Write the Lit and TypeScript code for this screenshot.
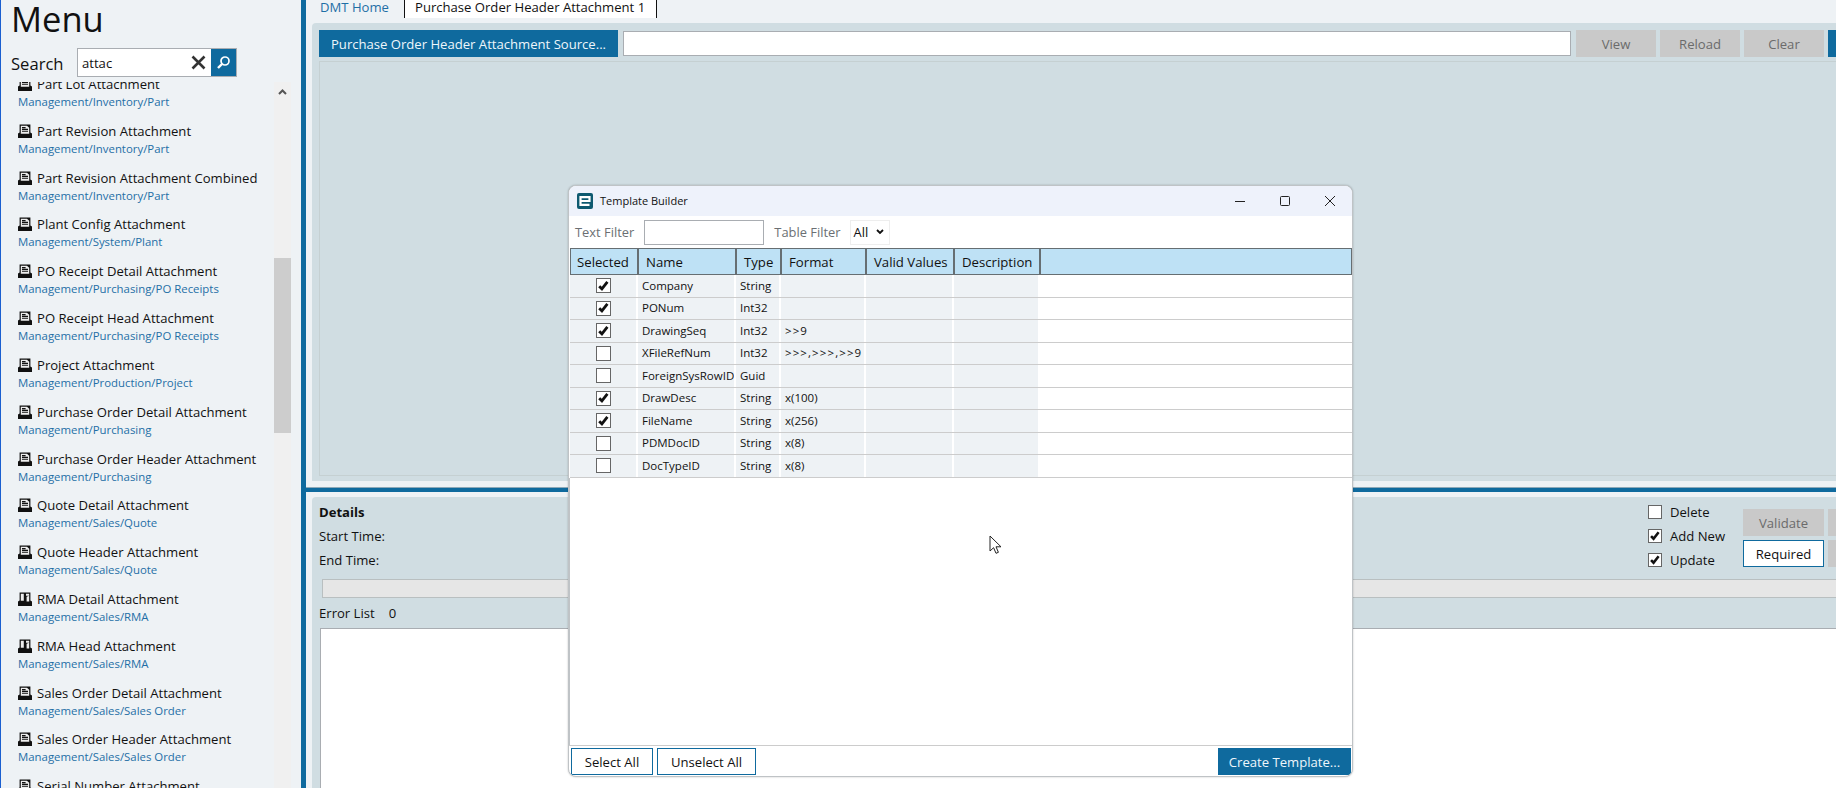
import { LitElement, html, css, svg } from 'lit';
import { customElement } from 'lit/decorators.js';

// sidebar entries, in the order they show up in the search result
const MENU = [
  ['Part Lot Attachment', 'Management/Inventory/Part'],
  ['Part Revision Attachment', 'Management/Inventory/Part'],
  ['Part Revision Attachment Combined', 'Management/Inventory/Part'],
  ['Plant Config Attachment', 'Management/System/Plant'],
  ['PO Receipt Detail Attachment', 'Management/Purchasing/PO Receipts'],
  ['PO Receipt Head Attachment', 'Management/Purchasing/PO Receipts'],
  ['Project Attachment', 'Management/Production/Project'],
  ['Purchase Order Detail Attachment', 'Management/Purchasing'],
  ['Purchase Order Header Attachment', 'Management/Purchasing'],
  ['Quote Detail Attachment', 'Management/Sales/Quote'],
  ['Quote Header Attachment', 'Management/Sales/Quote'],
  ['RMA Detail Attachment', 'Management/Sales/RMA'],
  ['RMA Head Attachment', 'Management/Sales/RMA'],
  ['Sales Order Detail Attachment', 'Management/Sales/Sales Order'],
  ['Sales Order Header Attachment', 'Management/Sales/Sales Order'],
  ['Serial Number Attachment', 'Management/Sales/Serial Number'],
];

// selected, name, type, format
const FIELDS: [boolean, string, string, string][] = [
  [true, 'Company', 'String', ''],
  [true, 'PONum', 'Int32', ''],
  [true, 'DrawingSeq', 'Int32', '>>9'],
  [false, 'XFileRefNum', 'Int32', '>>>,>>>,>>9'],
  [false, 'ForeignSysRowID', 'Guid', ''],
  [true, 'DrawDesc', 'String', 'x(100)'],
  [true, 'FileName', 'String', 'x(256)'],
  [false, 'PDMDocID', 'String', 'x(8)'],
  [false, 'DocTypeID', 'String', 'x(8)'],
];

const docIcon = svg`<svg class="doc" width="14" height="14" viewBox="0 0 14 14">
  <path fill="#111" d="M0 14V9.6l1.6-1.2V.6h10.8v7.8L14 9.6V14z"/>
  <path fill="#eee" d="M2.8 1.7h6.2l2.2 2v6H2.8z"/>
  <path stroke="#111" stroke-width="1.1" d="M4 3.6h3.6M4 5.4h6M4 7.2h6"/>
</svg>`;

// the RMA entries have a slightly different page on the tray
const docIconAlt = svg`<svg class="doc" width="14" height="14" viewBox="0 0 14 14">
  <path fill="#111" d="M0 14V9.6l1.6-1.2V.6h10.8v7.8L14 9.6V14z"/>
  <path fill="#eee" d="M2.8 1.7h3v7h-3zM8 1.7h3.2v2H8zM8.6 4.8l2.6-1v5.6H8.6z"/>
</svg>`;

const checkMark = svg`<svg width="14" height="14" viewBox="0 0 14 14">
  <path fill="none" stroke="#111" stroke-width="3" d="M2.4 7.2l2.9 3L11.2 2.6"/>
</svg>`;

@customElement('app-root')
export class AppRoot extends LitElement {
  static styles = css`
    :host {
      display: flex;
      position: relative;
      width: 1836px;
      height: 788px;
      overflow: hidden;
      background: #eef2f5;
      color: #111;
      font-family: 'Open Sans', 'Noto Sans', sans-serif;
      font-size: 13.1px;
    }

    /* left menu */
    .sidebar {
      flex: none;
      box-sizing: border-box;
      width: 301px;
      height: 788px;
      border-left: 1px solid #1a5fd0;
      display: flex;
      flex-direction: column;
    }
    .menu-title {
      height: 37px;
      margin: 0 0 1px 10px;
      font-size: 34.5px;
      font-weight: 400;
      line-height: 37px;
    }
    .search {
      height: 29px;
      margin-top: 10px;
      display: flex;
      align-items: center;
      padding-left: 10px;
      font-size: 16.6px;
    }
    .search-label {
      width: 66px;
      position: relative;
      top: 1px;
    }
    .search-box {
      box-sizing: border-box;
      width: 160px;
      height: 29px;
      border: 1px solid #a9adb2;
      background: #fff;
      display: flex;
      align-items: center;
      padding-left: 4px;
      font-size: 13.1px;
    }
    .search-box span {
      flex: 1;
    }
    .search-box .clear {
      margin-right: 5px;
      display: block;
    }
    .search-go {
      width: 25px;
      height: 27px;
      background: #0f6a9e;
      display: flex;
      align-items: center;
      justify-content: center;
    }
    .list-wrap {
      flex: 1;
      min-height: 0;
      margin-top: 5px;
      display: flex;
      overflow: hidden;
    }
    .list {
      width: 273px;
      flex: none;
      padding-left: 17px;
      box-sizing: border-box;
      margin-top: -8px;
    }
    .item {
      height: 46.82px;
    }
    .item-title {
      height: 20px;
      line-height: 20px;
      display: flex;
      align-items: center;
      gap: 5px;
      white-space: nowrap;
    }
    .doc {
      flex: none;
    }
    .item-path {
      height: 15px;
      line-height: 15px;
      font-size: 11.4px;
      color: #1f6fa6;
      white-space: nowrap;
    }
    .scroll {
      width: 17px;
      flex: none;
      background: #f0f0f0;
      display: flex;
      flex-direction: column;
      align-items: center;
    }
    .scroll svg {
      margin-top: 7px;
    }
    .thumb {
      width: 17px;
      height: 175px;
      margin-top: 163px;
      background: #cdcdcd;
    }
    .splitter-v {
      flex: none;
      width: 5px;
      background: #0f6a9e;
    }

    /* right side */
    .main {
      flex: 1;
      min-width: 0;
      padding-left: 6px;
      display: flex;
      flex-direction: column;
    }
    .tabs {
      flex: none;
      height: 18px;
      margin-bottom: 5px;
      display: flex;
      align-items: stretch;
      line-height: 14px;
    }
    .tab-home {
      width: 92px;
      padding-left: 8px;
      box-sizing: border-box;
      color: #1f6fa6;
    }
    .tab-active {
      box-sizing: border-box;
      width: 253px;
      background: #fff;
      border: solid #111;
      border-width: 0 1px;
      padding-left: 10px;
    }
    .top-panel {
      flex: none;
      box-sizing: border-box;
      height: 458px;
      background: #d0dde2;
      border-radius: 4px 0 0 0;
      padding: 7px 0 5px 7px;
      display: flex;
      flex-direction: column;
    }
    .toolbar {
      flex: none;
      height: 27px;
      display: flex;
      gap: 4px;
      margin-bottom: 4px;
      white-space: nowrap;
    }
    .btn {
      flex: none;
      box-sizing: border-box;
      height: 27px;
      width: 80px;
      display: flex;
      align-items: center;
      justify-content: center;
    }
    .btn.primary {
      background: #0f6a9e;
      color: #eef6fb;
    }
    .btn.off {
      background: #c9c9c9;
      color: #6b6b6b;
    }
    .btn.source {
      width: 299px;
    }
    .path-input {
      flex: none;
      box-sizing: border-box;
      width: 948px;
      height: 25px;
      margin: 1px 1px 1px 1px;
      background: #fff;
      border: 1px solid #a9adb2;
    }
    .canvas {
      flex: 1;
      border: 1px solid #c5d0d2;
      border-right: 0;
    }
    .splitter-h {
      flex: none;
      box-sizing: border-box;
      height: 5px;
      margin: 6px 0 5px -6px;
      background: #0f6a9e;
      border-top: 1px solid #8ea9b8;
    }
    .bottom-panel {
      flex: 1;
      min-height: 0;
      box-sizing: border-box;
      background: #d0dde2;
      border-radius: 4px 0 0 0;
      padding: 6px 0 0 7px;
      display: flex;
      flex-direction: column;
    }
    .details {
      flex: none;
      height: 76px;
      display: flex;
    }
    .details-left {
      flex: none;
      width: 1329px;
    }
    .details-left div,
    .check-row {
      height: 24px;
      line-height: 18px;
    }
    .details-head {
      font-weight: 700;
    }
    .checks {
      flex: none;
      width: 95px;
    }
    .check-row {
      display: flex;
      gap: 8px;
    }
    .box {
      flex: none;
      box-sizing: border-box;
      width: 14px;
      height: 14px;
      margin-top: 2px;
      background: #fff;
      border: 1px solid #666;
      display: flex;
      align-items: center;
      justify-content: center;
    }
    .details-btns {
      flex: none;
      margin-top: 6px;
      display: grid;
      grid-template-columns: 81px 80px;
      grid-auto-rows: 27px;
      gap: 4px;
    }
    .btn.outline {
      width: 81px;
      background: #fff;
      border: 1px solid #0f6a9e;
    }
    .btn.validate {
      width: 81px;
    }
    .progress {
      flex: none;
      height: 19px;
      margin-left: 3px;
      box-sizing: border-box;
      background: #e6e6e6;
      border: solid #b9bfc0;
      border-width: 1px 0 1px 1px;
    }
    .error-row {
      flex: none;
      height: 30px;
      display: flex;
      gap: 14px;
      align-items: center;
    }
    .error-box {
      flex: 1;
      margin-left: 1px;
      background: #fff;
      border: solid #a9adb2;
      border-width: 1px 0 0 1px;
    }

    /* the floating dialog */
    .dialog {
      position: absolute;
      left: 568px;
      top: 185px;
      box-sizing: border-box;
      width: 785px;
      height: 592px;
      background: #fff;
      border: 1px solid #bfc3c6;
      border-radius: 8px;
      box-shadow: 0 0 2px rgba(0, 0, 0, 0.25);
      display: flex;
      flex-direction: column;
      overflow: hidden;
    }
    .titlebar {
      flex: none;
      height: 30px;
      background: #eef2fb;
      display: flex;
      align-items: center;
      padding-left: 8px;
      font-size: 11px;
    }
    .titlebar .logo {
      margin-right: 7px;
    }
    .titlebar .name {
      flex: 1;
      position: relative;
      top: -1px;
    }
    .win {
      width: 45px;
      height: 30px;
      display: flex;
      align-items: center;
      justify-content: center;
    }
    .filters {
      flex: none;
      height: 32px;
      display: flex;
      align-items: center;
      padding-left: 6px;
      color: #6b6f73;
      font-size: 12.9px;
    }
    .text-filter {
      box-sizing: border-box;
      width: 120px;
      height: 25px;
      margin: 0 10px;
      border: 1px solid #a9adb2;
    }
    .table-filter {
      box-sizing: border-box;
      width: 40px;
      height: 25px;
      margin-left: 9px;
      border: 1px solid #eee;
      color: #111;
      display: flex;
      align-items: center;
      padding-left: 3px;
      gap: 8px;
    }
    .grid {
      flex: none;
      margin-left: 1px;
    }
    .grid-row {
      display: grid;
      grid-template-columns: 68px 98px 45px 85px 88px 86px 1fr;
    }
    .grid-head {
      box-sizing: border-box;
      height: 27px;
      background: #bee1f5;
      border: 1px solid #666e72;
      font-size: 13.2px;
    }
    .grid-head span {
      display: flex;
      align-items: center;
      padding-left: 7px;
      border-right: 2px solid #666e72;
    }
    .grid-head span:first-child {
      padding-left: 6px;
    }
    .grid-head span:last-child {
      border-right: 0;
    }
    .grid-body {
      box-sizing: border-box;
      height: 22.5px;
      border-bottom: 1px solid #ccc;
      font-size: 11.5px;
    }
    .grid-body > span {
      display: flex;
      align-items: center;
      padding: 0 0 1px 4px;
      background: #eef2f5;
      border-right: 2px solid #fff;
      white-space: nowrap;
      overflow: hidden;
    }
    .grid-body > span.mask {
      letter-spacing: 1.1px;
    }
    .grid-body > span.tick {
      justify-content: center;
      padding: 0;
    }
    .grid-body > span.tick .box {
      width: 15px;
      height: 15px;
      margin-top: 0;
    }
    .grid-body > span:last-child {
      background: #fff;
      border-right: 0;
    }
    .spacer {
      flex: 1;
      border-left: 1px solid #bfc3c6;
    }
    .dialog-actions {
      flex: none;
      height: 31px;
      box-sizing: border-box;
      border-top: 1px solid #ccc;
      padding: 2px 1px 0 2px;
      display: flex;
      gap: 4px;
    }
    .dialog-actions .btn.outline {
      width: 82px;
    }
    .dialog-actions .btn.outline.wide {
      width: 99px;
    }
    .dialog-actions .btn.create {
      width: 133px;
      margin-left: auto;
    }
    .cursor {
      position: absolute;
      left: 989px;
      top: 535px;
    }
  `;

  renderSidebar() {
    return html`
      <div class="sidebar">
        <h1 class="menu-title">Menu</h1>
        <div class="search">
          <span class="search-label">Search</span>
          <div class="search-box">
            <span>attac</span>
            <svg class="clear" width="15" height="15" viewBox="0 0 15 15">
              <path stroke="#333" stroke-width="2.6" d="M1.5 1.5l12 12M13.5 1.5l-12 12" />
            </svg>
            <div class="search-go">
              <svg width="15" height="15" viewBox="0 0 15 15" fill="none" stroke="#fff">
                <circle cx="9" cy="6" r="4" stroke-width="1.7" />
                <path stroke-width="2.4" d="M6 9l-4 4" />
              </svg>
            </div>
          </div>
        </div>
        <div class="list-wrap">
          <div class="list">
            ${MENU.map(
              ([title, path]) => html`
                <div class="item">
                  <div class="item-title">
                    ${title.startsWith('RMA') ? docIconAlt : docIcon}<span>${title}</span>
                  </div>
                  <div class="item-path">${path}</div>
                </div>
              `,
            )}
          </div>
          <div class="scroll">
            <svg width="9" height="6" viewBox="0 0 9 6" fill="none">
              <path stroke="#555" stroke-width="2" d="M1 5l3.5-3.5L8 5" />
            </svg>
            <div class="thumb"></div>
          </div>
        </div>
      </div>
    `;
  }

  renderDialog() {
    return html`
      <div class="dialog">
        <div class="titlebar">
          <svg class="logo" width="16" height="16" viewBox="0 0 16 16">
            <rect width="16" height="16" rx="2" fill="#0e5a70" />
            <path fill="none" stroke="#fff" stroke-width="2.2" d="M3.5 8h9V4.2h-9v7.6h9" />
          </svg>
          <span class="name">Template Builder</span>
          <div class="win">
            <svg width="12" height="12" viewBox="0 0 12 12"><path stroke="#222" d="M1 6.5h10" /></svg>
          </div>
          <div class="win">
            <svg width="12" height="12" viewBox="0 0 12 12">
              <rect x="1.5" y="1.5" width="9" height="9" rx="1" fill="none" stroke="#222" />
            </svg>
          </div>
          <div class="win">
            <svg width="12" height="12" viewBox="0 0 12 12">
              <path stroke="#222" d="M1 1l10 10M11 1L1 11" />
            </svg>
          </div>
        </div>
        <div class="filters">
          <span>Text Filter</span>
          <div class="text-filter"></div>
          <span>Table Filter</span>
          <div class="table-filter">
            All
            <svg width="8" height="6" viewBox="0 0 8 6" fill="none">
              <path stroke="#111" stroke-width="1.8" d="M1 1l3 3 3-3" />
            </svg>
          </div>
        </div>
        <div class="grid">
          <div class="grid-row grid-head">
            <span>Selected</span><span>Name</span><span>Type</span><span>Format</span><span>Valid Values</span
            ><span>Description</span><span></span>
          </div>
          ${FIELDS.map(
            ([on, name, type, format]) => html`
              <div class="grid-row grid-body">
                <span class="tick"><i class="box">${on ? checkMark : ''}</i></span>
                <span>${name}</span>
                <span>${type}</span>
                <span class=${format.startsWith('>') ? 'mask' : ''}>${format}</span>
                <span></span>
                <span></span>
                <span></span>
              </div>
            `,
          )}
        </div>
        <div class="spacer"></div>
        <div class="dialog-actions">
          <div class="btn outline">Select All</div>
          <div class="btn outline wide">Unselect All</div>
          <div class="btn primary create">Create Template...</div>
        </div>
      </div>
    `;
  }

  render() {
    return html`
      ${this.renderSidebar()}
      <div class="splitter-v"></div>
      <div class="main">
        <div class="tabs">
          <div class="tab-home">DMT Home</div>
          <div class="tab-active">Purchase Order Header Attachment 1</div>
        </div>
        <div class="top-panel">
          <div class="toolbar">
            <div class="btn primary source">Purchase Order Header Attachment Source...</div>
            <div class="path-input"></div>
            <div class="btn off">View</div>
            <div class="btn off">Reload</div>
            <div class="btn off">Clear</div>
            <div class="btn primary"></div>
          </div>
          <div class="canvas"></div>
        </div>
        <div class="splitter-h"></div>
        <div class="bottom-panel">
          <div class="details">
            <div class="details-left">
              <div class="details-head">Details</div>
              <div>Start Time:</div>
              <div>End Time:</div>
            </div>
            <div class="checks">
              <div class="check-row"><i class="box"></i>Delete</div>
              <div class="check-row"><i class="box">${checkMark}</i>Add New</div>
              <div class="check-row"><i class="box">${checkMark}</i>Update</div>
            </div>
            <div class="details-btns">
              <div class="btn off validate">Validate</div>
              <div class="btn off"></div>
              <div class="btn outline">Required</div>
              <div class="btn off"></div>
            </div>
          </div>
          <div class="progress"></div>
          <div class="error-row"><span>Error List</span><span>0</span></div>
          <div class="error-box"></div>
        </div>
      </div>
      ${this.renderDialog()}
      <svg class="cursor" width="13" height="20" viewBox="0 0 13 20">
        <path fill="#fff" stroke="#222" d="M1 1v15l3.6-3.3 2.4 5.6 2.4-1-2.4-5.5H12z" />
      </svg>
    `;
  }
}
